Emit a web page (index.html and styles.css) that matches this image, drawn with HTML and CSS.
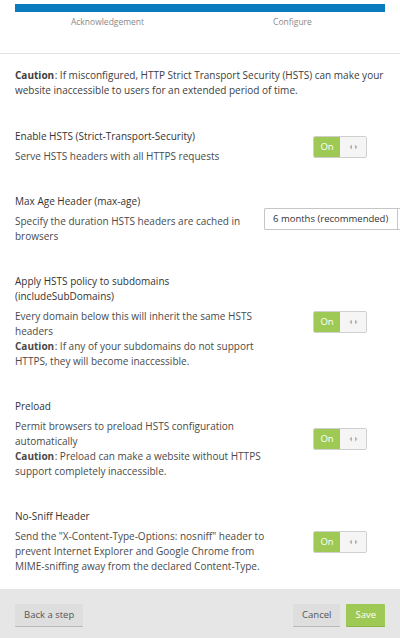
FILE: index.html
```html
<!DOCTYPE html>
<html>
<head>
<meta charset="utf-8">
<link rel="stylesheet" href="styles.css">
</head>
<body>
<div class="page">
  <div class="steps">
    <div class="bar"></div>
    <div class="labels">
      <span class="lab">Acknowledgement</span>
      <span class="lab">Configure</span>
    </div>
  </div>
  <div class="content">
    <p class="caution"><span class="strong">Caution</span>: If misconfigured, HTTP Strict Transport Security (HSTS) can make your website inaccessible to users for an extended period of time.</p>

    <div class="row">
      <div class="txt">
        <div class="title">Enable HSTS (Strict-Transport-Security)</div>
        <div class="desc">Serve HSTS headers with all HTTPS requests</div>
      </div>
      <div class="ctl"><div class="toggle"><span class="on">On</span><span class="off"><svg width="9" height="6" viewBox="0 0 9 6"><path d="M3 0.5 L0.5 3 L3 5.5 Z M6 0.5 L8.5 3 L6 5.5 Z" fill="#b3b3b3"/></svg></span></div></div>
    </div>

    <div class="row">
      <div class="txt">
        <div class="title">Max Age Header (max-age)</div>
        <div class="desc">Specify the duration HSTS headers are cached in browsers</div>
      </div>
      <div class="ctl sel-ctl"><div class="select"><span class="sel-val">6 months (recommended)</span><span class="sel-arrow"></span></div></div>
    </div>

    <div class="row">
      <div class="txt">
        <div class="title">Apply HSTS policy to subdomains (includeSubDomains)</div>
        <div class="desc">Every domain below this will inherit the same HSTS headers<br><span class="strong">Caution</span>: If any of your subdomains do not support HTTPS, they will become inaccessible.</div>
      </div>
      <div class="ctl"><div class="toggle"><span class="on">On</span><span class="off"><svg width="9" height="6" viewBox="0 0 9 6"><path d="M3 0.5 L0.5 3 L3 5.5 Z M6 0.5 L8.5 3 L6 5.5 Z" fill="#b3b3b3"/></svg></span></div></div>
    </div>

    <div class="row">
      <div class="txt">
        <div class="title">Preload</div>
        <div class="desc">Permit browsers to preload HSTS configuration automatically<br><span class="strong">Caution</span>: Preload can make a website without HTTPS support completely inaccessible.</div>
      </div>
      <div class="ctl"><div class="toggle"><span class="on">On</span><span class="off"><svg width="9" height="6" viewBox="0 0 9 6"><path d="M3 0.5 L0.5 3 L3 5.5 Z M6 0.5 L8.5 3 L6 5.5 Z" fill="#b3b3b3"/></svg></span></div></div>
    </div>

    <div class="row">
      <div class="txt">
        <div class="title">No-Sniff Header</div>
        <div class="desc">Send the "X-Content-Type-Options: nosniff" header to prevent Internet Explorer and Google Chrome from MIME-sniffing away from the declared Content-Type.</div>
      </div>
      <div class="ctl"><div class="toggle"><span class="on">On</span><span class="off"><svg width="9" height="6" viewBox="0 0 9 6"><path d="M3 0.5 L0.5 3 L3 5.5 Z M6 0.5 L8.5 3 L6 5.5 Z" fill="#b3b3b3"/></svg></span></div></div>
    </div>
  </div>
  <div class="footer">
    <button class="btn">Back a step</button>
    <div class="right">
      <button class="btn">Cancel</button>
      <button class="btn save">Save</button>
    </div>
  </div>
</div>
</body>
</html>
```
FILE: styles.css
```css
html, body {
  margin: 0;
  padding: 0;
  overflow: hidden;
  background: #fff;
}
body {
  font-family: "Open Sans", "DejaVu Sans", sans-serif;
  font-size: 10px;
  line-height: 15px;
  color: #404040;
  width: 400px;
  height: 638px;
}
.page {
  width: 400px;
}
.steps {
  padding: 4px 15px 0;
  height: 49px;
  border-bottom: 1px solid #e3e3e3;
}
.bar {
  height: 8px;
  background: #0a7bbd;
}
.labels {
  display: flex;
  margin-top: 3px;
}
.lab {
  flex: 1;
  text-align: center;
  font-size: 8.5px;
  line-height: 14px;
  color: #8a8a8a;
}
.content {
  padding: 0 15px;
}
.caution {
  margin: 0;
  padding-top: 14px;
  padding-bottom: 16px;
}
.strong {
  font-weight: 700;
  margin-right: 0.5px;
}
.row {
  display: flex;
  align-items: center;
  padding: 15px 0;
}
.txt {
  width: 250px;
  flex-shrink: 0;
}
.title {
  margin-bottom: 5px;
  color: #333;
}
.desc {
  color: #4a4a4a;
}
.ctl {
  margin-left: 48px;
  flex-shrink: 0;
}
.sel-ctl {
  margin-left: -1px;
  width: 121px;
  margin-right: -15px;
  padding-right: 15px;
  overflow: hidden;
}
.toggle {
  display: flex;
  width: 54px;
  height: 22px;
  box-sizing: border-box;
  border: 1px solid #cfcfcf;
  border-radius: 2px;
  overflow: hidden;
}
.on {
  width: 26px;
  background: #9dc954;
  color: #fff;
  text-align: center;
  line-height: 20px;
  font-size: 9.5px;
}
.off {
  flex: 1;
  background: #f5f5f5;
  display: flex;
  align-items: center;
  justify-content: center;
}
.select {
  display: flex;
  height: 22px;
  box-sizing: border-box;
  border: 1px solid #c6c6c6;
  border-right: none;
  border-radius: 2px 0 0 2px;
  width: 136px;
}
.sel-val {
  width: 133px;
  flex-shrink: 0;
  box-sizing: border-box;
  padding-left: 8px;
  line-height: 20px;
  font-size: 9.5px;
  color: #333;
  border-right: 1px solid #c6c6c6;
}
.sel-arrow {
  flex: 1;
}
.footer {
  background: #e6e6e6;
  height: 49px;
  display: flex;
  justify-content: space-between;
  align-items: flex-start;
  padding: 15px 15px 0;
  box-sizing: border-box;
}
.right {
  display: flex;
  gap: 6px;
}
.btn {
  font-family: "Open Sans", "DejaVu Sans", sans-serif;
  font-size: 9.5px;
  color: #555;
  background: #dedede;
  border: none;
  border-bottom: 1px solid #b8b8b8;
  height: 23px;
  padding: 0 9px;
  border-radius: 1px;
  line-height: 22px;
}
.save {
  background: #9dc954;
  color: #fff;
  border-bottom-color: #8ab544;
  padding: 0 9px;
}
```
